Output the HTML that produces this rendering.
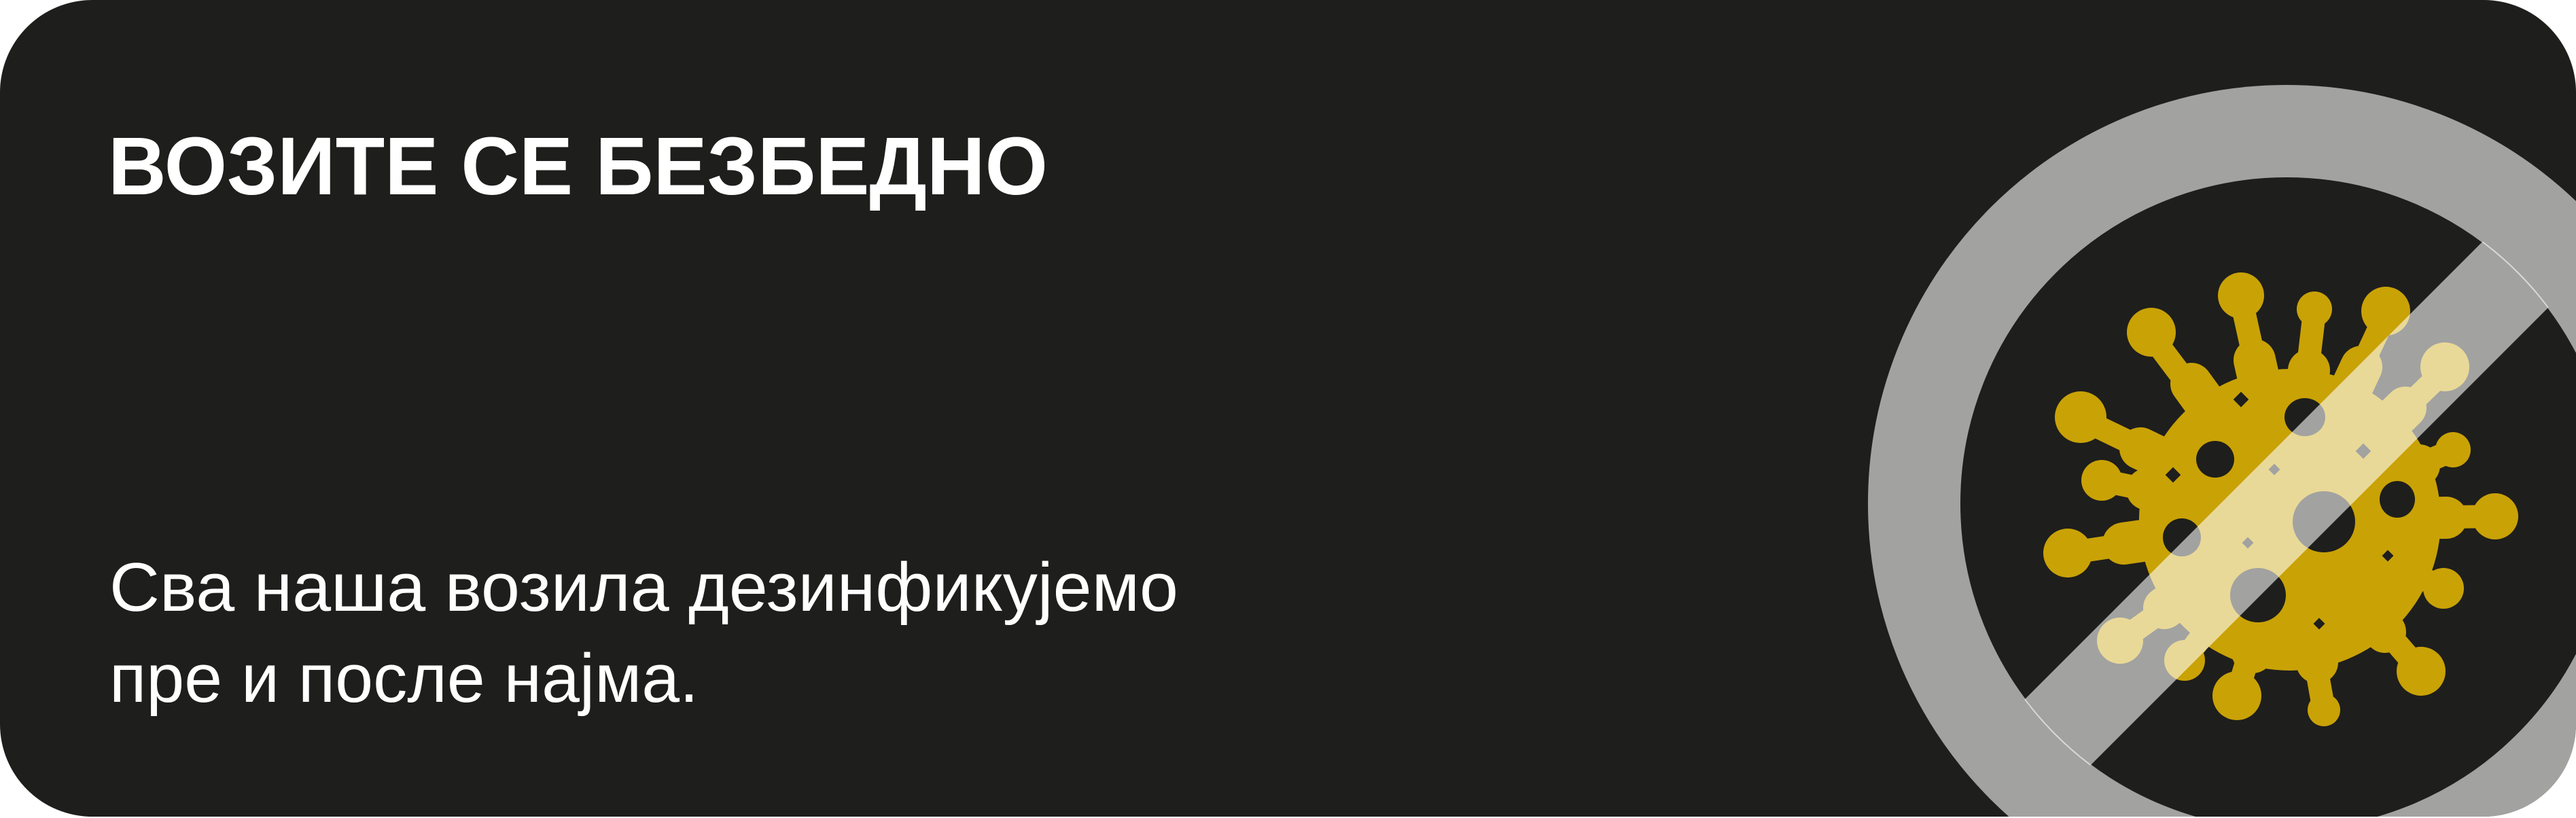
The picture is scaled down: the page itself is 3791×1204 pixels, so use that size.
<!DOCTYPE html>
<html><head><meta charset="utf-8"><style>
html,body{margin:0;padding:0;background:#fff;width:3791px;height:1204px;overflow:hidden;}
svg{display:block;}
</style></head><body>
<svg width="3791" height="1204" viewBox="0 0 3791 1204" xmlns="http://www.w3.org/2000/svg">
<defs>
<clipPath id="card"><rect x="0" y="0" width="3791" height="1202" rx="136" ry="136"/></clipPath>
<clipPath id="inner"><circle cx="3365" cy="741" r="482"/></clipPath>
<g id="sp">
</g>
</defs>
<rect x="0" y="0" width="3791" height="1202" rx="136" ry="136" fill="#1e1e1c"/>
<text x="159" y="286" font-family="Liberation Sans, sans-serif" font-weight="bold" font-size="121" fill="#fff" textLength="1383" lengthAdjust="spacingAndGlyphs">ВОЗИТЕ СЕ БЕЗБЕДНО</text>
<text x="161" y="899" font-family="Liberation Sans, sans-serif" font-size="101" fill="#fff" textLength="1573" lengthAdjust="spacingAndGlyphs">Сва наша возила дезинфикујемо</text>
<text x="161" y="1033" font-family="Liberation Sans, sans-serif" font-size="101" fill="#fff" textLength="867" lengthAdjust="spacingAndGlyphs">пре и после најма.</text>
<g clip-path="url(#card)">
<g fill="#c9a206" stroke="#c9a206" stroke-linecap="round">
<circle cx="3370" cy="765" r="222" stroke="none"/>
<g stroke-width="34">
<line x1="3370" y1="765" x2="3298" y2="440"/>
<line x1="3370" y1="765" x2="3406" y2="460"/>
<line x1="3370" y1="765" x2="3511" y2="463"/>
<line x1="3370" y1="765" x2="3166" y2="494"/>
<line x1="3370" y1="765" x2="3598" y2="545"/>
<line x1="3370" y1="765" x2="3070" y2="620"/>
<line x1="3370" y1="765" x2="3612" y2="662"/>
<line x1="3370" y1="765" x2="3093" y2="707"/>
<line x1="3370" y1="765" x2="3670" y2="760"/>
<line x1="3370" y1="765" x2="3045" y2="814"/>
<line x1="3370" y1="765" x2="3598" y2="866"/>
<line x1="3370" y1="765" x2="3125" y2="940"/>
<line x1="3370" y1="765" x2="3215" y2="970"/>
<line x1="3370" y1="765" x2="3560" y2="985"/>
<line x1="3370" y1="765" x2="3292" y2="1022"/>
<line x1="3370" y1="765" x2="3420" y2="1045"/>
</g>
<g stroke-width="62">
<line x1="3370" y1="765" x2="3318" y2="530"/>
<line x1="3370" y1="765" x2="3398" y2="545"/>
<line x1="3370" y1="765" x2="3475" y2="540"/>
<line x1="3370" y1="765" x2="3225" y2="565"/>
<line x1="3370" y1="765" x2="3540" y2="600"/>
<line x1="3370" y1="765" x2="3150" y2="660"/>
<line x1="3370" y1="765" x2="3560" y2="685"/>
<line x1="3370" y1="765" x2="3160" y2="720"/>
<line x1="3370" y1="765" x2="3600" y2="762"/>
<line x1="3370" y1="765" x2="3125" y2="800"/>
<line x1="3370" y1="765" x2="3545" y2="845"/>
<line x1="3370" y1="765" x2="3185" y2="895"/>
<line x1="3370" y1="765" x2="3255" y2="920"/>
<line x1="3370" y1="765" x2="3510" y2="930"/>
<line x1="3370" y1="765" x2="3315" y2="960"/>
<line x1="3370" y1="765" x2="3410" y2="975"/>
</g>
<g stroke="none">
<circle cx="3298" cy="435" r="34"/><circle cx="3406" cy="455" r="26"/><circle cx="3511" cy="458" r="36"/>
<circle cx="3166" cy="489" r="36"/><circle cx="3598" cy="540" r="36"/><circle cx="3062" cy="614" r="38"/>
<circle cx="3610" cy="662" r="26"/><circle cx="3093" cy="707" r="30"/><circle cx="3672" cy="760" r="34"/>
<circle cx="3043" cy="814" r="36"/><circle cx="3596" cy="866" r="30"/><circle cx="3120" cy="943" r="34"/>
<circle cx="3215" cy="972" r="30"/><circle cx="3563" cy="988" r="36"/><circle cx="3292" cy="1024" r="36"/>
<circle cx="3420" cy="1045" r="24"/>
</g>
</g>
<g fill="#1e1e1c">
<ellipse cx="3392" cy="614" rx="30" ry="28"/>
<ellipse cx="3260" cy="676" rx="28" ry="27"/>
<ellipse cx="3211" cy="791" rx="28" ry="28"/>
<ellipse cx="3420" cy="768" rx="46" ry="45"/>
<ellipse cx="3323" cy="876" rx="41" ry="40"/>
<ellipse cx="3528" cy="735" rx="26" ry="27"/>
<rect x="3290" y="580" width="16" height="16" transform="rotate(45 3298 588)"/>
<rect x="3190" y="691" width="16" height="16" transform="rotate(45 3198 699)"/>
<rect x="3341" y="685" width="12" height="12" transform="rotate(45 3347 691)"/>
<rect x="3470" y="656" width="16" height="16" transform="rotate(45 3478 664)"/>
<rect x="3302" y="793" width="12" height="12" transform="rotate(45 3308 799)"/>
<rect x="3508" y="812" width="12" height="12" transform="rotate(45 3514 818)"/>
<rect x="3407" y="912" width="12" height="12" transform="rotate(45 3413 918)"/>
</g>
<circle cx="3365" cy="741" r="548" fill="none" stroke="#fff" stroke-opacity="0.59" stroke-width="136"/>
<g clip-path="url(#inner)">
<line x1="2765" y1="1341" x2="3965" y2="141" stroke="#fff" stroke-opacity="0.59" stroke-width="137"/>
</g>
</g>
</svg>
</body></html>
